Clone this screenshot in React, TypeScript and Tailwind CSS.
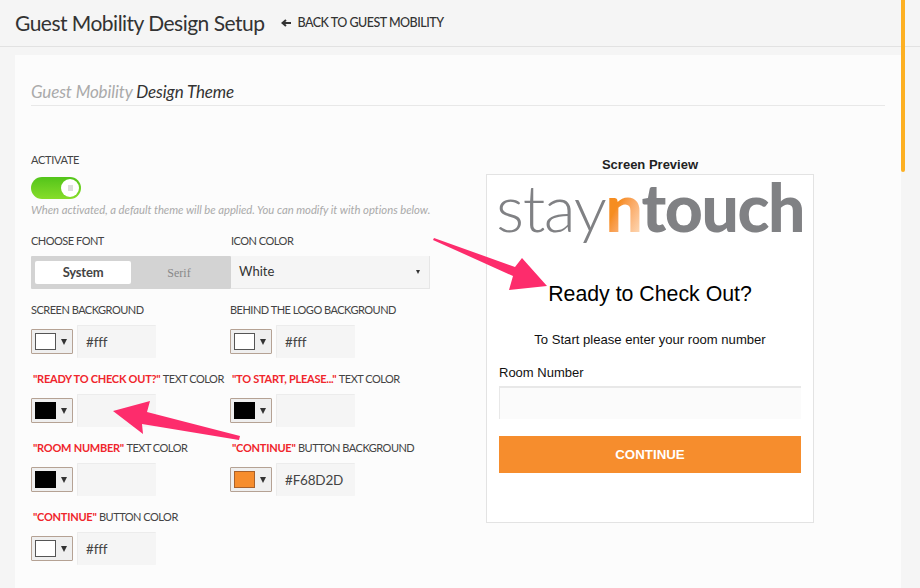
const sans = "font-['Lato','Open_Sans',sans-serif]";

function Swatch({ color, border }: { color: string; border: string }) {
  return (
    <div className="flex h-[25px] w-[42px] items-center rounded-[1px] border border-[#b5a294] bg-[#efefef] pl-[3px]">
      <div className={`h-[17px] w-[21px] border ${border}`} style={{ backgroundColor: color }} />
      <span className="ml-[5px] h-0 w-0 border-x-[3px] border-t-[6px] border-x-transparent border-t-[#333]" />
    </div>
  );
}

function ColorField({ color, border, value }: { color: string; border: string; value?: string }) {
  return (
    <div className="flex items-center gap-[4px]">
      <Swatch color={color} border={border} />
      <div className="flex h-[33px] w-[79px] items-center rounded-[1px] border-t border-l border-[#ececec] bg-[#f5f5f5] pl-[8px] text-[13.5px] tracking-[-0.2px] text-[#444]">
        {value}
      </div>
    </div>
  );
}

function Label({ red, text }: { red?: string; text: string }) {
  return (
    <div className="h-[16px] whitespace-nowrap text-[11px] leading-[16px] tracking-[-0.5px] text-[#444]">
      {red && <span className="ml-[2px] font-bold tracking-[-0.25px] text-[#f0262c]">{red} </span>}
      {text}
    </div>
  );
}

function Cell({ red, text, color, border, value }: { red?: string; text: string; color: string; border: string; value?: string }) {
  return (
    <div className="flex flex-col gap-[7px]">
      <Label red={red} text={text} />
      <ColorField color={color} border={border} value={value} />
    </div>
  );
}

export default function App() {
  return (
    <div className={`relative h-[588px] w-[920px] overflow-hidden bg-[#f5f5f5] ${sans}`}>
      <header className="flex h-[47px] items-center border-b border-[#e2e2e2] pl-[15px]">
        <h1 className="text-[21px] font-normal tracking-[-0.52px] text-[#333]">Guest Mobility Design Setup</h1>
        <svg className="ml-[17px] mr-[6px]" width="10" height="10" viewBox="0 0 10 10">
          <path d="M10 5H2M5 2L1.5 5L5 8" fill="none" stroke="#333" strokeWidth="2" />
        </svg>
        <span className="text-[12.5px] font-medium tracking-[-0.5px] text-[#333]">BACK TO GUEST MOBILITY</span>
      </header>

      <main className="relative ml-[15px] mt-[8px] h-[533px] w-[886px] bg-[#fcfcfc] px-[16px] pt-[26px]">
        <h2 className="border-b border-[#e8e8e8] pb-[2px] text-[17px] italic leading-[22px] tracking-[-0.12px] text-[#aaa]">
          Guest Mobility <span className="text-[#333]">Design Theme</span>
        </h2>

        <div className="flex">
          <section className="w-[455px] shrink-0 pt-[46px]">
            <div className="h-[16px] text-[11px] leading-[16px] tracking-[-0.3px] text-[#444]">ACTIVATE</div>
            <div className="mt-[9px] flex h-[22px] w-[50px] items-center justify-end rounded-full bg-gradient-to-b from-[#52c41a] to-[#86dd2a] pr-[2px]">
              <div className="flex h-[18px] w-[18px] items-center justify-center rounded-full bg-white">
                <div className="h-[6px] w-[5px] bg-[#ddd]" />
              </div>
            </div>
            <p className="mt-[3px] h-[16px] text-[11.3px] italic leading-[16px] tracking-[-0.03px] text-[#aaa]">
              When activated, a default theme will be applied. You can modify it with options below.
            </p>

            <div className="mt-[15px] flex">
              <div className="flex w-[200px] flex-col gap-[7px]">
                <Label text="CHOOSE FONT" />
                <div className="flex h-[33px] items-center rounded-[1px] bg-[#d3d3d3] px-[4px]">
                  <div className="flex h-[23px] w-[96px] items-center justify-center rounded-[2px] bg-white text-[13px] font-bold tracking-[-0.2px] text-[#444]">System</div>
                  <div className="flex-1 text-center font-['Liberation_Serif',serif] text-[12px] text-[#888]">Serif</div>
                </div>
              </div>
              <div className="flex w-[199px] flex-col gap-[7px]">
                <Label text="ICON COLOR" />
                <div className="flex h-[33px] items-center justify-between border-r border-b border-[#e6e6e6] bg-[#f5f5f5] pl-[8px] pr-[9px] text-[13px] text-[#333]">
                  White
                  <span className="h-0 w-0 border-x-[2.5px] border-t-[4px] border-x-transparent border-t-[#333]" />
                </div>
              </div>
            </div>

            <div className="mt-[13px] grid grid-cols-[199px_199px] gap-y-[13px]">
              <Cell text="SCREEN BACKGROUND" color="#fff" border="border-[#555]" value="#fff" />
              <Cell text="BEHIND THE LOGO BACKGROUND" color="#fff" border="border-[#555]" value="#fff" />
              <Cell red={'"READY TO CHECK OUT?"'} text="TEXT COLOR" color="#000" border="border-[#000]" />
              <Cell red={'"TO START, PLEASE..."'} text="TEXT COLOR" color="#000" border="border-[#000]" />
              <Cell red={'"ROOM NUMBER"'} text="TEXT COLOR" color="#000" border="border-[#000]" />
              <Cell red={'"CONTINUE"'} text="BUTTON BACKGROUND" color="#F68D2D" border="border-[#a9612a]" value="#F68D2D" />
              <Cell red={'"CONTINUE"'} text="BUTTON COLOR" color="#fff" border="border-[#555]" value="#fff" />
            </div>
          </section>

          <aside className="pt-[50px] font-['Liberation_Sans',sans-serif]">
            <div className="h-[18px] w-[328px] text-center text-[13px] font-bold leading-[18px] text-[#222]">Screen Preview</div>
            <div className="flex h-[349px] w-[328px] flex-col border border-[#e3e3e3] bg-white px-[12px]">
              <div className="mt-[-1px] flex h-[66px] items-center justify-center whitespace-nowrap font-['Lato',sans-serif] text-[66px] leading-[66px] tracking-[-1.4px] text-[#808184]">
                <span className="font-[300]">stay</span>
                <span className="bg-gradient-to-br from-[#f68d20] from-40% to-[#fde3c8] bg-clip-text font-[900] text-transparent">n</span>
                <span className="font-[900]">touch</span>
              </div>
              <div className="mt-[41px] text-center text-[21.3px] leading-[26px] text-black">Ready to Check Out?</div>
              <div className="mt-[24px] text-center text-[13.1px] leading-[18px] text-[#111]">To Start please enter your room number</div>
              <div className="mt-[15px] text-[13px] leading-[18px] text-[#111]">Room Number</div>
              <div className="mt-[4px] h-[33px] w-[302px] border-t-2 border-l border-[#e8e8e8] bg-[#fbfbfb]" />
              <div className="mt-[17px] flex h-[37px] w-[302px] items-center justify-center bg-[#f68d2d] text-[13.3px] font-bold text-white">CONTINUE</div>
            </div>
          </aside>
        </div>
      </main>

      <div className="absolute right-[15px] top-0 h-[172px] w-[4px] rounded-b-[2px] bg-[#fdb022]" />

      <svg className="pointer-events-none absolute left-0 top-0" width="920" height="588" viewBox="0 0 920 588">
        <polygon points="434,238 515,267 522,258 547,286 509,290 513,276 433,240" fill="#fd2c6c" />
        <polygon points="240,436 147,412 150,401 113,411 143,434 142,424 239,440" fill="#fd2c6c" />
      </svg>
    </div>
  );
}
